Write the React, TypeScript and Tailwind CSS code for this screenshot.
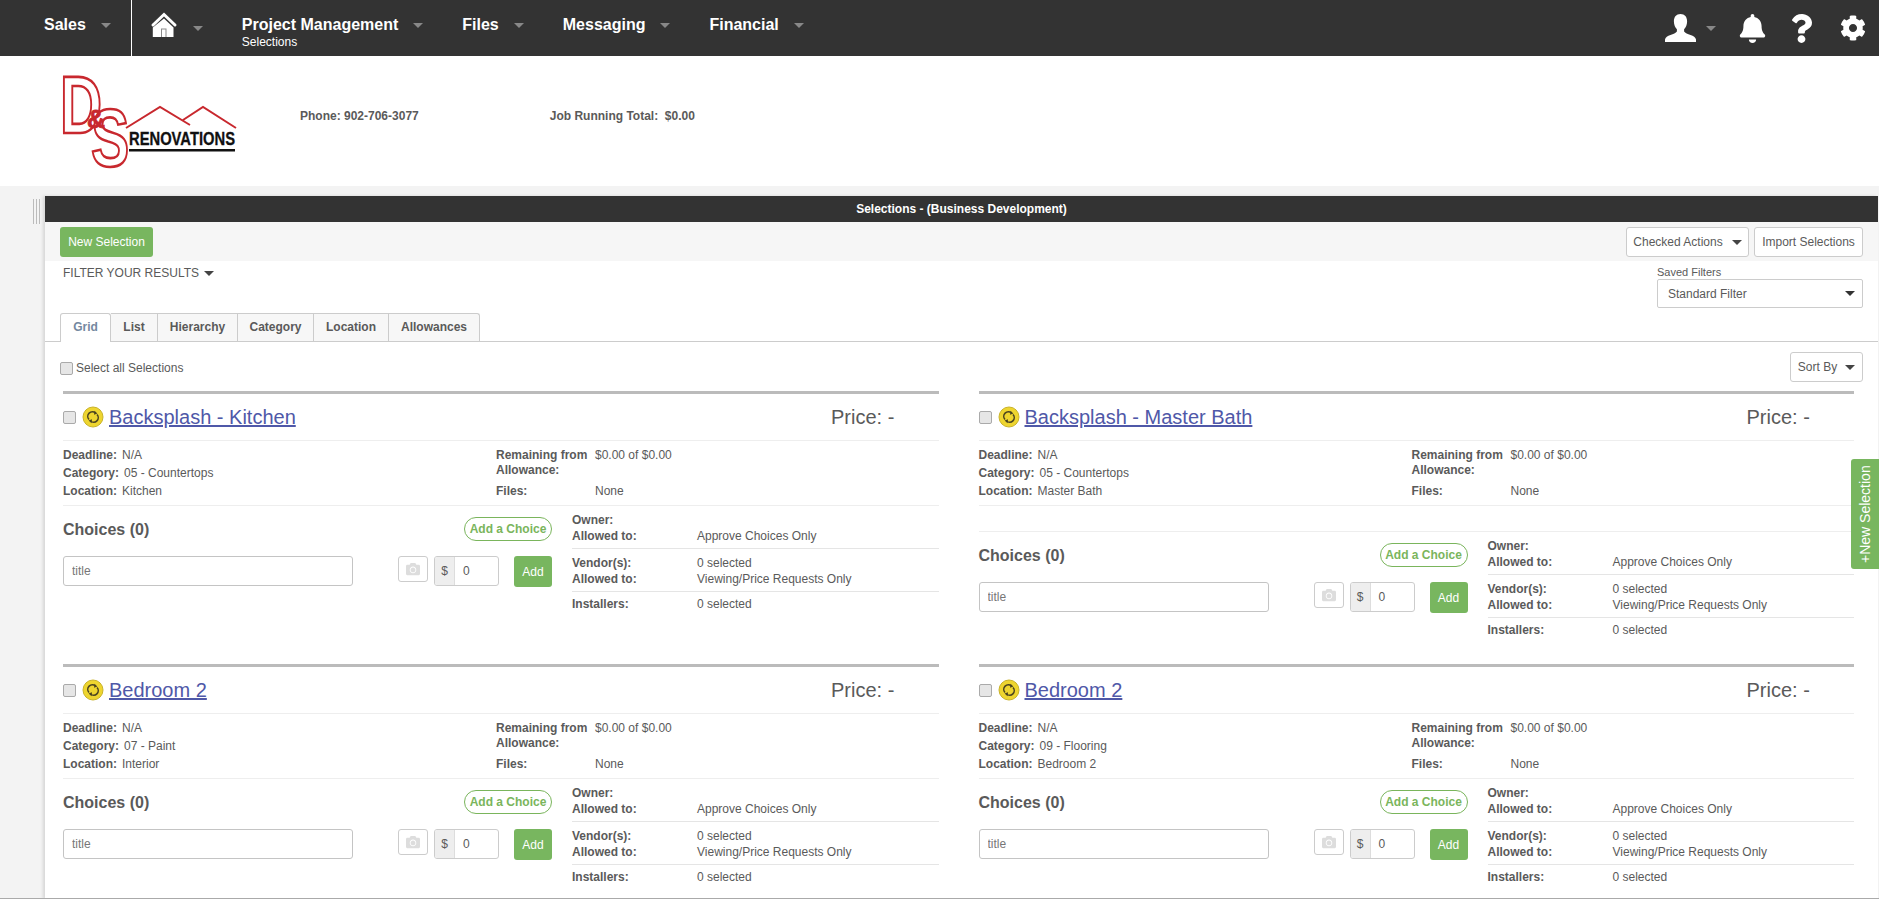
import { FaBell, FaCamera, FaCog, FaQuestion } from "react-icons/fa";

const Caret = ({ className = "border-t-[#888]" }: { className?: string }) => (
  <span className={`inline-block h-0 w-0 border-x-[5px] border-t-[5px] border-x-transparent ${className}`} />
);

const NavItem = ({ label, sub, className = "" }: { label: string; sub?: string; className?: string }) => (
  <div className={`flex items-start pt-[15px] ${className}`}>
    <div className="flex flex-col">
      <span className="text-[16px] font-bold leading-[20px] text-white">{label}</span>
      {sub && <span className="text-[12px] leading-[14px] text-white">{sub}</span>}
    </div>
    <span className="ml-[15px] mt-[8px] flex">
      <Caret />
    </span>
  </div>
);

const HomeIcon = () => (
  <svg width="28" height="28" viewBox="0 0 28 28" className="text-white">
    <path d="M3 14 14 3.5 25 14" fill="none" stroke="currentColor" strokeWidth="3" strokeLinecap="round" />
    <path d="M14 7.5 23.5 16.5V26H2.8V16.5Z" fill="currentColor" />
    <path d="M11 26V17.5H16.5V26" fill="#8a8a8a" />
    <path d="M12 26V18.5H15.5V26Z" fill="#fff" />
  </svg>
);

const UserIcon = () => (
  <svg width="31" height="28" viewBox="0 0 31 28">
    <path
      d="M15.5 0c4.2 0 6.6 3 6.6 7.4 0 3.2-1.3 6-3 7.8v2.4c1 1.6 3.6 2.4 6.4 3.4 3 1.1 5 2.2 5.5 4.4V28H0v-2.6c.5-2.2 2.5-3.3 5.5-4.4 2.8-1 5.4-1.8 6.4-3.4v-2.4c-1.7-1.8-3-4.6-3-7.8C8.9 3 11.3 0 15.5 0Z"
      fill="#fff"
    />
  </svg>
);

const TopBar = () => (
  <div className="flex h-[56px] shrink-0 items-stretch bg-[#333]">
    <NavItem label="Sales" className="ml-[44px]" />
    <div className="ml-[20px] w-px bg-white" />
    <div className="ml-[18px] flex items-start pt-[11px]">
      <HomeIcon />
      <span className="ml-[15px] mt-[15px] flex">
        <Caret />
      </span>
    </div>
    <NavItem label="Project Management" sub="Selections" className="ml-[39px]" />
    <NavItem label="Files" className="ml-[39px]" />
    <NavItem label="Messaging" className="ml-[39px]" />
    <NavItem label="Financial" className="ml-[39px]" />
    <div className="ml-auto mr-[13px] flex items-center">
      <UserIcon />
      <span className="ml-[10px] flex">
        <Caret />
      </span>
      <FaBell className="ml-[22px] text-white" size={29} />
      <FaQuestion className="ml-[20px] text-white" size={29} />
      <FaCog className="ml-[24px] text-white" size={26} />
    </div>
  </div>
);

const Logo = () => (
  <svg width="190" height="110" viewBox="0 0 190 110" className="shrink-0 overflow-visible">
    <text
      transform="translate(5 68) scale(.72 1)"
      fontSize="81"
      fontWeight="bold"
      fontFamily="Liberation Sans"
      fill="#fff"
      stroke="#c8282e"
      strokeWidth="2.6"
    >
      D
    </text>
    <text
      transform="translate(36 101) scale(.7 1)"
      fontSize="82"
      fontWeight="bold"
      fontFamily="Liberation Sans"
      fill="#fff"
      stroke="#c8282e"
      strokeWidth="2.6"
    >
      S
    </text>
    <text x="32" y="63" fontSize="25" fontWeight="bold" fontFamily="Liberation Sans" fill="#c8282e" stroke="#c8282e" strokeWidth=".8">
      &amp;
    </text>
    <path d="M71 63 105 42 135 60M128 55 148 42 181 63" fill="none" stroke="#c8282e" strokeWidth="2" />
    <text
      x="74"
      y="80"
      fontSize="18"
      fontWeight="bold"
      fontFamily="Liberation Sans"
      fill="#111"
      stroke="#111"
      strokeWidth=".3"
      textLength="106"
      lengthAdjust="spacingAndGlyphs"
    >
      RENOVATIONS
    </text>
    <rect x="74" y="84" width="106" height="2.5" fill="#111" />
  </svg>
);

const Header = () => (
  <div className="flex h-[130px] shrink-0 items-start bg-white pl-[55px] pt-[9px]">
    <Logo />
    <span className="ml-[55px] mt-[43px] text-[12px] font-bold leading-[16px] text-[#5a5a5a]">Phone: 902-706-3077</span>
    <span className="ml-[131px] mt-[43px] text-[12px] font-bold leading-[16px] text-[#5a5a5a]">
      Job Running Total:&nbsp; $0.00
    </span>
  </div>
);

const Check = () => (
  <input
    type="checkbox"
    readOnly
    className="h-[13px] w-[13px] shrink-0 appearance-none rounded-[2px] border border-[#aaa] bg-[#e6e6e6]"
  />
);

const SyncBadge = () => (
  <svg width="22" height="22" viewBox="0 0 22 22" className="shrink-0">
    <circle cx="11" cy="11" r="10" fill="#eed52f" stroke="#c9b32a" strokeWidth="1" />
    <path d="M7 13.5A4.6 4.6 0 0 1 13.5 7" fill="none" stroke="#4b4420" strokeWidth="1.6" />
    <path d="M15 8.5A4.6 4.6 0 0 1 8.5 15" fill="none" stroke="#4b4420" strokeWidth="1.6" />
    <path d="M12.5 4.8 15.4 7.5 12 8.8Z" fill="#4b4420" />
    <path d="M9.5 17.2 6.6 14.5 10 13.2Z" fill="#4b4420" />
  </svg>
);

const Field = ({ label, value }: { label: string; value: string }) => (
  <div className="leading-[18px]">
    <span className="font-bold">{label}:</span>
    <span className="ml-[5px]">{value}</span>
  </div>
);

const PeopleRow = ({ rows, border = true }: { rows: [string, string][]; border?: boolean }) => (
  <div className={`pb-[4px] ${border ? "border-b border-[#e5e5e5] pt-[6px]" : "pt-[4px]"}`}>
    {rows.map(([label, value], i) => (
      <div key={i} className="grid grid-cols-[125px_1fr] leading-[16px]">
        <span className="font-bold">{label}</span>
        <span>{value}</span>
      </div>
    ))}
  </div>
);

type Selection = {
  title: string;
  category: string;
  location: string;
  gap?: boolean;
};

const Card = ({ item }: { item: Selection }) => (
  <div className="h-[273px] text-[12px] text-[#5a5a5a]">
    <div className="h-[3px] bg-[#bbb]" />
    <div className="relative flex h-[47px] items-center border-b border-[#eee]">
      <Check />
      <span className="ml-[6px] flex">
        <SyncBadge />
      </span>
      <a className="ml-[5px] text-[20px] leading-[24px] text-[#4f58a8] underline">{item.title}</a>
      <span className="absolute left-[768px] text-[20px] leading-[24px] text-[#5a5a5a]">Price: -</span>
    </div>
    <div className="flex h-[65px] border-b border-[#eee] pt-[5px]">
      <div className="w-[433px]">
        <Field label="Deadline" value="N/A" />
        <Field label="Category" value={item.category} />
        <Field label="Location" value={item.location} />
      </div>
      <div className="w-[300px]">
        <div className="mt-[2px] grid h-[34px] grid-cols-[99px_1fr] leading-[15px]">
          <span className="font-bold">Remaining from Allowance:</span>
          <span>$0.00 of $0.00</span>
        </div>
        <div className="grid grid-cols-[99px_1fr] leading-[18px]">
          <span className="font-bold">Files:</span>
          <span>None</span>
        </div>
      </div>
    </div>
    {item.gap && <div className="h-[26px] border-b border-[#eee]" />}
    <div className="flex">
      <div className="w-[489px]">
        <div className="flex h-[50px] items-center justify-between pb-[3px]">
          <span className="text-[16px] font-bold">Choices (0)</span>
          <span className="mb-[2px] flex h-[24px] w-[88px] items-center justify-center rounded-full border border-[#7ab55c] font-bold text-[#7ab55c]">
            Add a Choice
          </span>
        </div>
        <div className="flex items-start">
          <input
            placeholder="title"
            readOnly
            className="h-[30px] w-[290px] rounded-[3px] border border-[#c4c4c4] px-[8px] text-[12px] placeholder:text-[#777]"
          />
          <span className="ml-[45px] flex h-[26px] w-[30px] items-center justify-center rounded-[3px] border border-[#ccc] text-[#ddd]">
            <FaCamera size={14} />
          </span>
          <div className="ml-[6px] flex h-[30px] w-[65px] overflow-hidden rounded-[3px] border border-[#ccc]">
            <span className="flex w-[20px] items-center justify-center border-r border-[#ddd] bg-[#eee]">$</span>
            <span className="flex items-center pl-[8px]">0</span>
          </div>
          <button className="ml-auto h-[31px] w-[38px] rounded-[3px] bg-[#78b65f] text-white">Add</button>
        </div>
      </div>
      <div className="ml-[20px] flex-1">
        <PeopleRow rows={[["Owner:", ""], ["Allowed to:", "Approve Choices Only"]]} />
        <PeopleRow rows={[["Vendor(s):", "0 selected"], ["Allowed to:", "Viewing/Price Requests Only"]]} />
        <PeopleRow rows={[["Installers:", "0 selected"]]} border={false} />
      </div>
    </div>
  </div>
);

const items: Selection[] = [
  { title: "Backsplash - Kitchen", category: "05 - Countertops", location: "Kitchen" },
  { title: "Backsplash - Master Bath", category: "05 - Countertops", location: "Master Bath", gap: true },
  { title: "Bedroom 2", category: "07 - Paint", location: "Interior" },
  { title: "Bedroom 2", category: "09 - Flooring", location: "Bedroom 2" },
];

const tabs = ["List", "Hierarchy", "Category", "Location", "Allowances"];
const tabWidths = ["w-[47px]", "w-[80px]", "w-[76px]", "w-[75px]", "w-[91px]"];

export default function App() {
  return (
    <div className="relative flex h-screen flex-col overflow-hidden bg-[#f3f3f3] font-['Liberation_Sans',Arial,sans-serif]">
      <TopBar />
      <Header />
      <div className="flex min-h-0 flex-1 pt-[10px]">
        <div className="flex w-[45px] shrink-0 justify-end pr-[5px] pt-[3px]">
          <div className="flex h-[25px] gap-[2px]">
            <span className="w-px bg-[#bbb]" />
            <span className="w-px bg-[#bbb]" />
            <span className="w-px bg-[#bbb]" />
          </div>
        </div>
        <div className="mr-px flex-1 bg-white shadow-[-2px_0_3px_rgba(0,0,0,0.12)]">
          <div className="flex h-[26px] items-center justify-center bg-[#333] text-[12px] font-bold text-white">
            Selections - (Business Development)
          </div>
          <div className="flex h-[39px] items-start justify-between bg-[#f6f6f6] px-[15px] pt-[5px] text-[12px]">
            <button className="h-[30px] w-[93px] rounded-[3px] bg-[#78b65f] text-white">New Selection</button>
            <div className="flex gap-[5px] text-[#5a5a5a]">
              <button className="flex h-[30px] w-[123px] items-center justify-center gap-[9px] rounded-[3px] border border-[#ccc] bg-white">
                Checked Actions
                <Caret className="border-t-[#444]" />
              </button>
              <button className="h-[30px] w-[109px] rounded-[3px] border border-[#ccc] bg-white">Import Selections</button>
            </div>
          </div>
          <div className="flex h-[52px] items-start justify-between pl-[18px] pr-[15px]">
            <div className="mt-[4px] flex items-center gap-[5px] text-[12px] leading-[16px] text-[#5a5a5a]">
              FILTER YOUR RESULTS
              <Caret className="border-t-[#444]" />
            </div>
            <div className="w-[206px] pt-[5px] text-[#5a5a5a]">
              <div className="text-[11px] leading-[13px]">Saved Filters</div>
              <div className="flex h-[29px] items-center justify-between rounded-[2px] border border-[#ccc] pl-[10px] pr-[7px] text-[12px]">
                Standard Filter
                <Caret className="border-t-[#333]" />
              </div>
            </div>
          </div>
          <div className="flex h-[29px] border-b border-[#ccc] pl-[15px] text-[12px] font-bold text-[#5a5a5a]">
            <div className="z-10 flex h-[29px] w-[51px] items-center justify-center rounded-t-[3px] border-x border-t border-[#ccc] bg-white pb-[2px] text-[#7488a0]">
              Grid
            </div>
            {tabs.map((t, i) => (
              <div
                key={t}
                className={`flex h-[28px] items-center justify-center border-r border-t border-[#ccc] bg-[#f7f7f7] pb-[2px] ${tabWidths[i]} ${
                  i === tabs.length - 1 ? "rounded-tr-[3px]" : ""
                }`}
              >
                {t}
              </div>
            ))}
          </div>
          <div className="flex h-[49px] items-start justify-between pl-[15px] pr-[15px] pt-[10px] text-[12px] text-[#5a5a5a]">
            <label className="mt-[8px] flex items-center gap-[3px] leading-[16px]">
              <Check />
              Select all Selections
            </label>
            <button className="flex h-[30px] w-[73px] items-center justify-center gap-[8px] rounded-[3px] border border-[#ccc] bg-white">
              Sort By
              <Caret className="border-t-[#444]" />
            </button>
          </div>
          <div className="ml-[18px] mr-[24px] grid grid-cols-2 gap-x-[40px]">
            {items.map((item, i) => (
              <Card key={i} item={item} />
            ))}
          </div>
        </div>
      </div>
      <div className="absolute bottom-0 left-0 right-0 h-px bg-[#aaa]" />
      <div className="absolute right-0 top-[459px] flex h-[110px] w-[28px] rotate-180 items-center justify-center rounded-r-[3px] bg-[#78b65f] text-[14px] text-white [writing-mode:vertical-rl]">
        +New Selection
      </div>
    </div>
  );
}
